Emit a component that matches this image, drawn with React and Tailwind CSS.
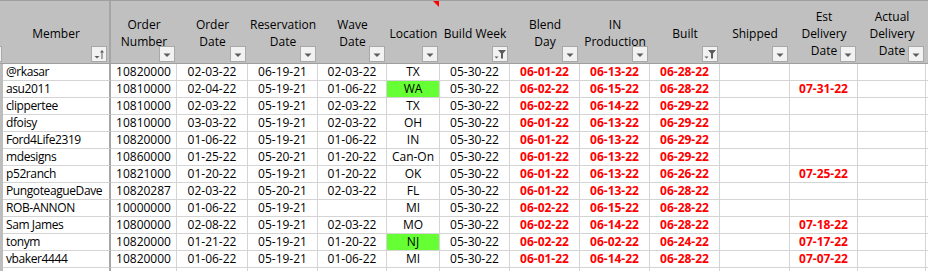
import React from 'react';

const cols = [
  { key: 'member', label: ['Member'], w: 'w-[108px]', btn: 'sort', align: 'left' },
  { key: 'orderNo', label: ['Order', 'Number'], w: 'w-[66px]', btn: 'drop' },
  { key: 'orderDate', label: ['Order', 'Date'], w: 'w-[71px]', btn: 'drop' },
  { key: 'resDate', label: ['Reservation', 'Date'], w: 'w-[70px]', btn: 'drop' },
  { key: 'waveDate', label: ['Wave', 'Date'], w: 'w-[69px]', btn: 'drop' },
  { key: 'location', label: ['Location'], w: 'w-[53px]', btn: 'drop', note: true },
  { key: 'buildWeek', label: ['Build Week'], w: 'w-[70px]', btn: 'filter' },
  { key: 'blend', label: ['Blend', 'Day'], w: 'w-[70px]', btn: 'drop', red: true },
  { key: 'inProd', label: ['IN', 'Production'], w: 'w-[70px]', btn: 'drop', red: true },
  { key: 'built', label: ['Built'], w: 'w-[70px]', btn: 'filter', red: true },
  { key: 'shipped', label: ['Shipped'], w: 'w-[70px]', btn: 'drop', red: true },
  { key: 'estDel', label: ['Est', 'Delivery', 'Date'], w: 'w-[68px]', btn: 'drop', red: true },
  { key: 'actDel', label: ['Actual', 'Delivery', 'Date'], w: 'w-[68px]', btn: 'drop', red: true },
];

const rows = [
  ['@rkasar', '10820000', '02-03-22', '06-19-21', '02-03-22', 'TX', '05-30-22', '06-01-22', '06-13-22', '06-28-22', '', '', ''],
  ['asu2011', '10810000', '02-04-22', '05-19-21', '01-06-22', 'WA', '05-30-22', '06-02-22', '06-15-22', '06-28-22', '', '07-31-22', ''],
  ['clippertee', '10810000', '02-03-22', '05-19-21', '02-03-22', 'TX', '05-30-22', '06-02-22', '06-14-22', '06-29-22', '', '', ''],
  ['dfoisy', '10810000', '03-03-22', '05-19-21', '02-03-22', 'OH', '05-30-22', '06-01-22', '06-13-22', '06-29-22', '', '', ''],
  ['Ford4Life2319', '10820000', '01-06-22', '05-19-21', '01-06-22', 'IN', '05-30-22', '06-01-22', '06-13-22', '06-29-22', '', '', ''],
  ['mdesigns', '10860000', '01-25-22', '05-20-21', '01-20-22', 'Can-On', '05-30-22', '06-01-22', '06-13-22', '06-29-22', '', '', ''],
  ['p52ranch', '10821000', '01-20-22', '05-19-21', '01-20-22', 'OK', '05-30-22', '06-01-22', '06-13-22', '06-26-22', '', '07-25-22', ''],
  ['PungoteagueDave', '10820287', '02-03-22', '05-20-21', '02-03-22', 'FL', '05-30-22', '06-01-22', '06-13-22', '06-28-22', '', '', ''],
  ['ROB-ANNON', '10000000', '01-06-22', '05-19-21', '', 'MI', '05-30-22', '06-02-22', '06-15-22', '06-28-22', '', '', ''],
  ['Sam James', '10800000', '02-08-22', '05-19-21', '02-03-22', 'MO', '05-30-22', '06-02-22', '06-14-22', '06-28-22', '', '07-18-22', ''],
  ['tonym', '10820000', '01-21-22', '05-19-21', '01-20-22', 'NJ', '05-30-22', '06-02-22', '06-02-22', '06-24-22', '', '07-17-22', ''],
  ['vbaker4444', '10820000', '01-06-22', '05-19-21', '01-06-22', 'MI', '05-30-22', '06-01-22', '06-14-22', '06-28-22', '', '07-07-22', ''],
  ['', '', '', '', '', '', '', '', '', '', '', '', ''],
];

const green = ['WA', 'NJ'];

const FilterButton = ({ type }) => (
  <div className="absolute right-[2px] bottom-[1px] w-[16px] h-[16px] border border-[#a8a8a8] bg-[#f2f2f2]">
    <svg width="14" height="14" viewBox="0 0 14 14" className="block">
      {type === 'drop' && <path d="M3.5 6.5h7l-3.5 3.5z" fill="#5c5c5c" />}
      {type === 'sort' && (
        <g fill="#5c5c5c">
          <path d="M2.5 9h5l-2.5 2.5z" />
          <rect x="9.5" y="4" width="1" height="8" />
          <path d="M8 5.5l2-2.5 2 2.5z" />
        </g>
      )}
      {type === 'filter' && (
        <g fill="#5c5c5c">
          <path d="M1.5 9.5h4l-2 2z" />
          <path d="M5 3h8l-3 3.5v5h-2v-5z" />
        </g>
      )}
    </svg>
  </div>
);

export default function App() {
  return (
    <div className="w-[928px] h-[271px] overflow-hidden bg-white text-[12px] text-black" style={{ fontFamily: '"Open Sans", "Noto Sans", sans-serif' }}>
      {/* header */}
      <div className="flex h-[64px] bg-[#c0c0c0] border-t border-b border-[#9f9f9f]">
        <div className="relative w-[3px] shrink-0">
          <div className="absolute left-0 bottom-[1px] w-[2px] h-[16px] bg-[#f2f2f2] border-r border-y border-[#a8a8a8]" />
        </div>
        {cols.map((c) => (
          <div
            key={c.key}
            className={`relative shrink-0 ${c.w} flex items-center justify-center text-center leading-[17px] whitespace-nowrap ${c.key === 'member' ? 'border-r-2 border-[#a6a6a6]' : ''}`}
          >
            <div className="pt-[2px]">
              {c.label.map((l) => (
                <div key={l}>{l}</div>
              ))}
            </div>
            <FilterButton type={c.btn} />
            {c.note && (
              <div className="absolute right-[1px] top-0 w-0 h-0 border-t-[6px] border-l-[6px] border-t-[#ff0000] border-l-transparent" />
            )}
          </div>
        ))}
        <div className="flex-1" />
      </div>

      {/* rows */}
      {rows.map((r, i) => (
        <div key={i} className="flex h-[17px]">
          <div className="w-[3px] shrink-0 bg-[#bdbdbd]" />
          {cols.map((c, j) => {
            const v = r[j];
            const isGreen = c.key === 'location' && green.includes(v);
            return (
              <div
                key={c.key}
                className={`shrink-0 ${c.w} flex items-center border-b leading-[16px] whitespace-nowrap overflow-hidden ${
                  c.key === 'member'
                    ? 'border-r-2 border-r-[#a6a6a6] border-b-[#d4d4d4] pl-[3px] justify-start tracking-[-0.4px]'
                    : 'border-r border-[#d4d4d4] justify-center'
                } ${isGreen ? 'bg-[#66ff33]' : ''} ${c.red ? 'text-[#ff0000] font-bold' : ''}`}
              >
                {v}
              </div>
            );
          })}
          <div className="flex-1 border-b border-[#d4d4d4]" />
        </div>
      ))}
    </div>
  );
}
